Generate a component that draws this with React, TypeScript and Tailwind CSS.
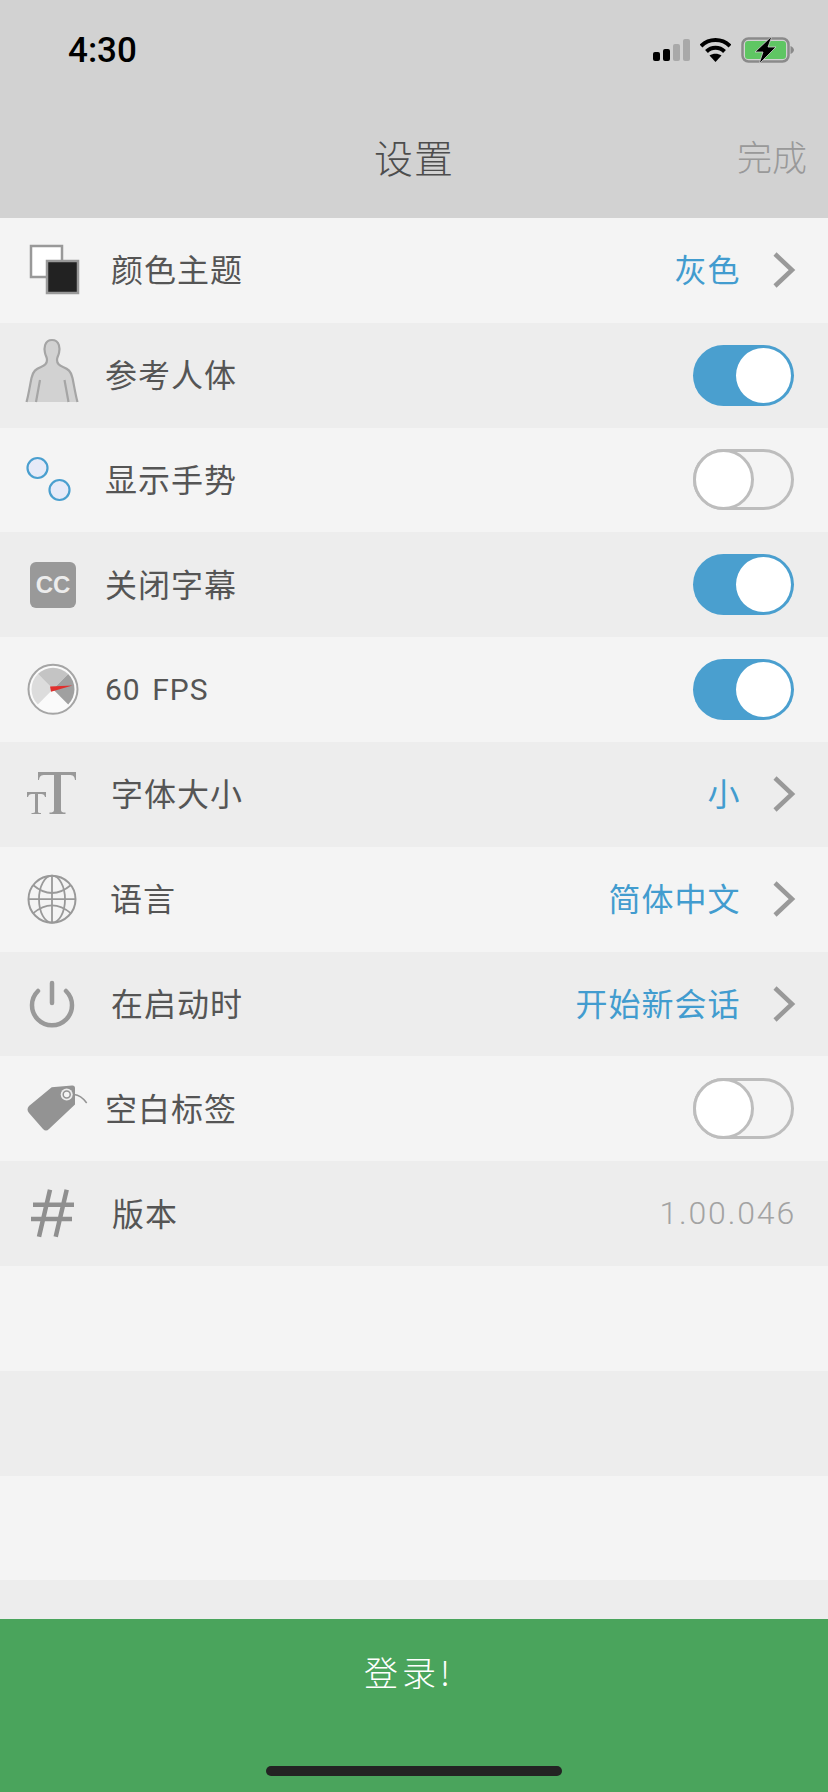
import React from 'react';

const CJK = "font-['Noto_Sans_CJK_SC','Noto_Sans',sans-serif]";

const ThemeIcon = () => (
  <svg width="92" height="105" viewBox="0 0 92 105">
    <rect x="31" y="28" width="31" height="31" fill="#fff" stroke="#999" strokeWidth="2.5" />
    <rect x="47" y="43" width="31" height="32" fill="#222" stroke="#999" strokeWidth="2.5" />
  </svg>
);

const BodyIcon = () => (
  <svg width="92" height="105" viewBox="0 0 92 105">
    <path
      d="M26.500 79 C28.500 72 30 62 31.500 55 C33 48 36 46 41 44 C45 42.500 47 41 47 37 C47 34 46 34 45 30 C44 26 44 17 52 17 C60 17 60 26 59 30 C58 34 57 34 57 37 C57 41 59 42.500 63 44 C68 46 71 48 72.500 55 C74 62 75.500 72 77.500 79"
      fill="#d2d2d2"
      stroke="#a5a5a5"
      strokeWidth="2.2"
      strokeLinejoin="round"
    />
    <path d="M40 57 L36 79 M64.500 57 L68.500 79" fill="none" stroke="#a5a5a5" strokeWidth="2.2" />
  </svg>
);

const GestureIcon = () => (
  <svg width="92" height="105" viewBox="0 0 92 105">
    <circle cx="37.5" cy="40" r="10" fill="#e6eaf8" stroke="#4a9fcf" strokeWidth="2.2" />
    <circle cx="59.5" cy="62" r="10" fill="#e6eaf8" stroke="#4a9fcf" strokeWidth="2.2" />
  </svg>
);

const CaptionIcon = () => (
  <div className="w-[92px] h-full flex items-center">
    <div className="ml-[30px] w-[46px] h-[46px] rounded-[6px] bg-[#999999] flex items-center justify-center text-[#ececec] font-['Liberation_Sans',sans-serif] font-bold text-[24px] leading-none">
      CC
    </div>
  </div>
);

const GaugeIcon = () => (
  <svg width="92" height="105" viewBox="0 0 92 105">
    <circle cx="53" cy="52.3" r="24.5" fill="#fafafa" stroke="#a5a5a5" strokeWidth="2" />
    <path d="M53 52.3 L37.8 37.1 A21.500 21.500 0 0 1 68.200 37.100 Z" fill="#c4c4c4" />
    <path d="M53 52.3 L37.8 67.5 A21.500 21.500 0 0 1 37.800 37.100 Z" fill="#dcdcdc" />
    <path d="M53 52.3 L68.200 37.100 A21.500 21.500 0 0 1 68.200 67.500 Z" fill="#a0a0a0" />
    <path d="M50 49.5 L72.500 48.500 L51 54.800 Z" fill="#e0302e" />
  </svg>
);

const FontSizeIcon = () => (
  <svg width="92" height="105" viewBox="0 0 92 105" fill="#999">
    <path d="M38 30 H76 V38 H75 C74.500 34 73 33 69 33 H61 V68 C61 70 62.500 70.500 65.500 70.500 V72 H49.500 V70.500 C52.500 70.500 54 70 54 68 V33 H45 C41 33 39.500 34 39 38 H38 Z" />
    <path d="M27 50 H46 V55 H45 C44.500 53 43.500 52 41 52 H38 V70 C38 70.800 39 71 41 71 V72 H31.500 V71 C33.500 71 35 70.800 35 70 V52 H32 C29.500 52 28.500 53 28 55 H27 Z" />
  </svg>
);

const GlobeIcon = () => (
  <svg width="92" height="105" viewBox="0 0 92 105" fill="none" stroke="#999" strokeWidth="1.8">
    <circle cx="52" cy="52.2" r="23.500" strokeWidth="2" />
    <ellipse cx="52" cy="52.2" rx="13" ry="23.500" />
    <path d="M52 28.700 V75.700 M28.500 52.200 H75.500" />
    <path d="M33 38 Q52 54 71 38 M33 66.400 Q52 50.400 71 66.400" />
  </svg>
);

const PowerIcon = () => (
  <svg width="92" height="105" viewBox="0 0 92 105" fill="none" stroke="#999" strokeLinecap="round" strokeWidth="4.500">
    <path d="M38 39 A20 20 0 1 0 66 39" />
    <path d="M52 31 V51" />
  </svg>
);

const TagIcon = () => (
  <svg width="92" height="105" viewBox="0 0 92 105">
    <path
      d="M29 50 L51.700 31.300 L72 29.600 C74 29.400 75 30.500 75 32 L75 48.600 L49 73 C47 75 45 75 43 73 L29 57 C27 55 27 52 29 50 Z"
      fill="#939393"
    />
    <circle cx="66.700" cy="38.600" r="6" fill="#ececec" />
    <circle cx="66.700" cy="38.600" r="3.500" fill="#f4f4f4" stroke="#939393" strokeWidth="1.500" />
    <path d="M74 38.600 C79 39 83 42 86.700 47" fill="none" stroke="#939393" strokeWidth="1.500" />
  </svg>
);

const HashIcon = () => (
  <svg width="92" height="105" viewBox="0 0 92 105" fill="none" stroke="#8f8f8f" strokeWidth="4.500">
    <path d="M50 28.800 L39 75.800 M66.700 28.800 L55.700 75.800 M33 43.800 H74 M31 58 H72" />
  </svg>
);

const Toggle = ({ on }: { on: boolean }) =>
  on ? (
    <div className="w-[101px] h-[61px] rounded-full bg-[#4a9fcf] flex items-center justify-end pr-[3px]">
      <div className="w-[55px] h-[55px] rounded-full bg-white" />
    </div>
  ) : (
    <div className="w-[101px] h-[61px] rounded-full border-[3px] border-[#bdbdbd] flex items-center">
      <div className="w-[61px] h-[61px] -ml-[3px] rounded-full bg-white border-[3px] border-[#bdbdbd]" />
    </div>
  );

const ValueLink = ({ text }: { text: string }) => (
  <div className="flex items-center -mr-[1.5px]">
    <span className="pb-[4px] text-[32px] tracking-[1px] text-[#429ccf] font-normal">{text}</span>
    <svg className="ml-[31px]" width="24" height="36" viewBox="0 0 24 36" fill="none" stroke="#999" strokeWidth="4.500">
      <path d="M3 2 L20 18 L3 34" />
    </svg>
  </div>
);

type Row = {
  label: string;
  icon?: React.ReactNode;
  labelClass?: string;
  right?: React.ReactNode;
};

const cjkLabel = 'pb-[4px] text-[32px] tracking-[1px]';

const rows: Row[] = [
  { label: '颜色主题', icon: <ThemeIcon />, labelClass: `ml-[19px] ${cjkLabel}`, right: <ValueLink text="灰色" /> },
  { label: '参考人体', icon: <BodyIcon />, labelClass: `ml-[13px] ${cjkLabel}`, right: <Toggle on /> },
  { label: '显示手势', icon: <GestureIcon />, labelClass: `ml-[13px] ${cjkLabel}`, right: <Toggle on={false} /> },
  { label: '关闭字幕', icon: <CaptionIcon />, labelClass: `ml-[13px] ${cjkLabel}`, right: <Toggle on /> },
  {
    label: '60 FPS',
    icon: <GaugeIcon />,
    labelClass: "ml-[13px] text-[30px] tracking-[1px] [word-spacing:3px] font-['Roboto',sans-serif]",
    right: <Toggle on />,
  },
  { label: '字体大小', icon: <FontSizeIcon />, labelClass: `ml-[19px] ${cjkLabel}`, right: <ValueLink text="小" /> },
  { label: '语言', icon: <GlobeIcon />, labelClass: `ml-[18px] ${cjkLabel}`, right: <ValueLink text="简体中文" /> },
  { label: '在启动时', icon: <PowerIcon />, labelClass: `ml-[19px] ${cjkLabel}`, right: <ValueLink text="开始新会话" /> },
  { label: '空白标签', icon: <TagIcon />, labelClass: `ml-[13px] ${cjkLabel}`, right: <Toggle on={false} /> },
  {
    label: '版本',
    icon: <HashIcon />,
    labelClass: `ml-[20px] ${cjkLabel}`,
    right: (
      <span className="block -mr-[2px] pb-[2px] text-[32px] tracking-[1.85px] font-light text-[#a3a3a3] font-['Roboto',sans-serif]">
        1.00.046
      </span>
    ),
  },
  { label: '' },
  { label: '' },
  { label: '' },
  { label: '' },
];

export default function App() {
  return (
    <div className={`w-[828px] h-[1792px] flex flex-col overflow-hidden bg-[#f4f4f4] ${CJK}`}>
      <header className="h-[218px] shrink-0 bg-[#d2d2d2] flex flex-col">
        <div className="h-[100px] flex items-center justify-between pl-[68px] pr-[34px]">
          <span className="text-[35px] font-['Roboto',sans-serif] text-black font-medium leading-none">4:30</span>
          <div className="flex items-center">
            <svg width="37" height="26" viewBox="0 0 37 26">
              <rect x="0" y="15" width="7" height="9" rx="2" fill="#000" />
              <rect x="10" y="12" width="7" height="12" rx="2" fill="#000" />
              <rect x="20" y="7" width="7" height="17" rx="2" fill="#a9a9a9" />
              <rect x="30" y="2" width="7" height="22" rx="2" fill="#a9a9a9" />
            </svg>
            <svg className="ml-[10px]" width="31" height="26" viewBox="1 0 31 26" fill="none" stroke="#000" strokeWidth="4">
              <path d="M2 9 C10 1 23 1 31 9" />
              <path d="M7.500 14.500 C12.500 9.500 20.500 9.500 25.500 14.500" />
              <path d="M16.500 25 L10.500 18.500 C14 16 19 16 22.500 18.500 Z" fill="#000" stroke="none" />
            </svg>
            <svg className="ml-[10px]" width="53" height="28" viewBox="0 0 53 28">
              <rect x="1.500" y="2.500" width="46" height="23" rx="6" fill="none" stroke="#8a8a8a" strokeWidth="2.500" />
              <rect x="4" y="5" width="41" height="18" rx="3" fill="#5fc663" />
              <path d="M49.500 10 C51.500 11 53 12.500 53 14 C53 15.500 51.500 17 49.500 18 Z" fill="#8a8a8a" />
              <path d="M31 0 L14 16 H22 L18 28 L35 11 H27 Z" fill="#000" stroke="#d2d2d2" strokeWidth="0.8" />
            </svg>
          </div>
        </div>
        <div className="relative flex-1 flex items-start justify-center pt-[30px]">
          <span className="text-[39px] leading-[52px] tracking-[1px] font-light text-[#4d4d4d]">设置</span>
          <span className="absolute right-[21px] top-[30px] text-[35px] leading-[52px] font-light text-[#999999]">完成</span>
        </div>
      </header>

      <main className="flex-1 min-h-0 overflow-hidden">
        {rows.map((row, i) => (
          <div
            key={i}
            className={`h-[104.8px] flex items-center pr-[34px] ${i % 2 === 0 ? 'bg-[#f4f4f4]' : 'bg-[#ededed]'}`}
          >
            {row.icon && <div className="w-[92px] h-full shrink-0">{row.icon}</div>}
            {row.label && <span className={`${row.labelClass} font-normal text-[#555555]`}>{row.label}</span>}
            {row.right && <div className="ml-auto">{row.right}</div>}
          </div>
        ))}
      </main>

      <footer className="h-[173.4px] shrink-0 bg-[#4aa45c] flex flex-col items-center">
        <span className="mt-[28px] mr-[10px] text-[34px] leading-[50px] tracking-[4px] font-light text-white">登录!</span>
        <div className="mt-auto mb-[16px] w-[296px] h-[10px] rounded-full bg-[#232323]" />
      </footer>
    </div>
  );
}
